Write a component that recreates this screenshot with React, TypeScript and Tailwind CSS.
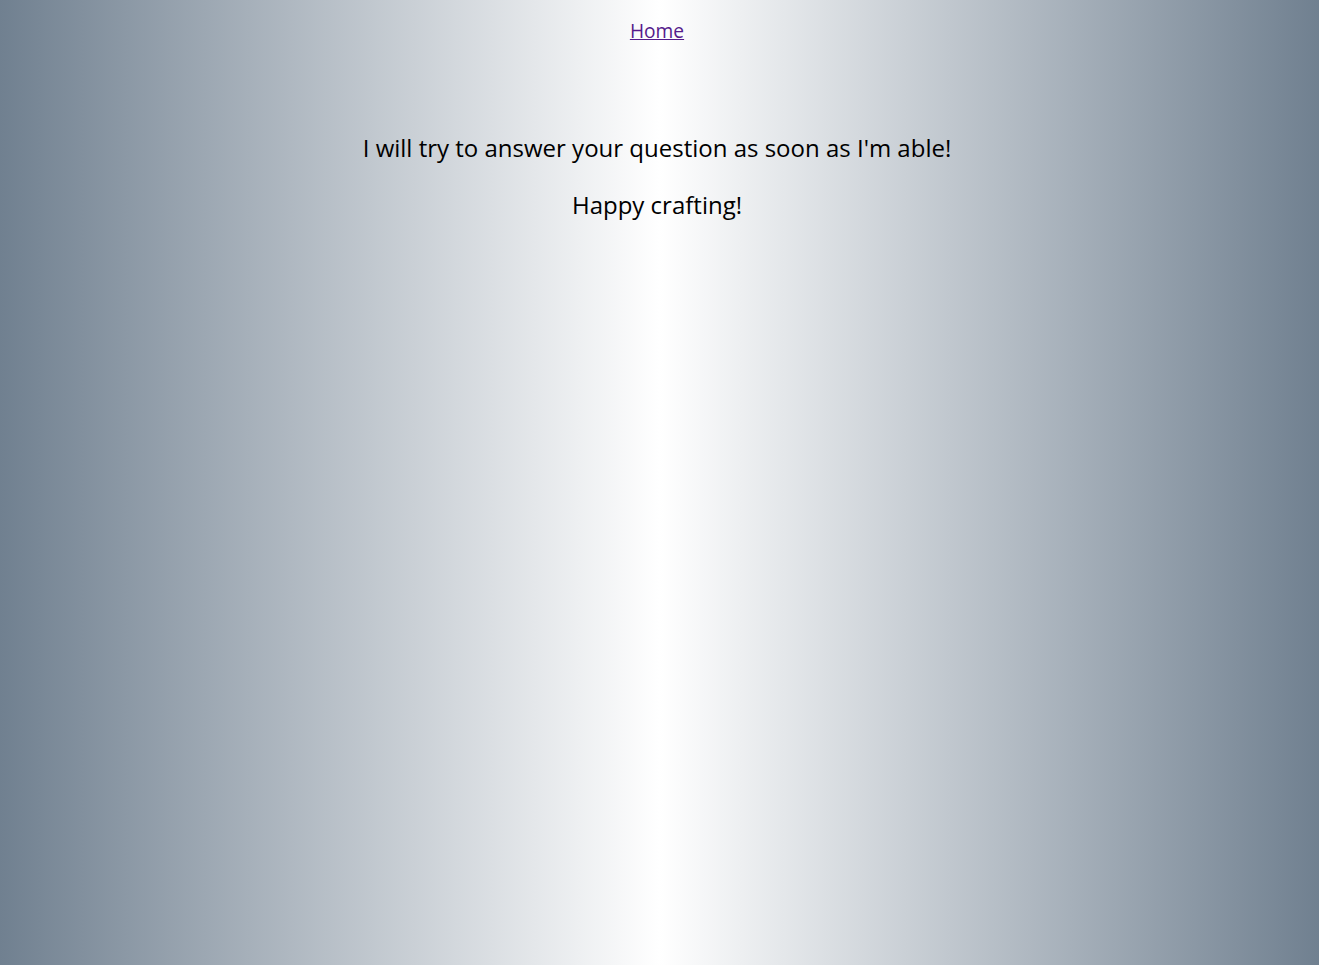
export default function App() {
  return (
    <div
      className="min-h-[965px] w-full text-center text-black bg-[linear-gradient(to_right,#708090,white,#708090)]"
      style={{ fontFamily: '"Open Sans", sans-serif' }}
    >
      <div className="pr-[5px]">
        <nav className="pt-[18px]">
          <a href="#" className="text-[19.2px] leading-[1.362] text-[#551a8b] underline">
            Home
          </a>
        </nav>
        <main className="pt-[88px]">
          <p className="text-2xl leading-[1.362] mb-6">
            I will try to answer your question as soon as I'm able!
          </p>
          <p className="text-2xl leading-[1.362]">Happy crafting!</p>
        </main>
      </div>
    </div>
  );
}
